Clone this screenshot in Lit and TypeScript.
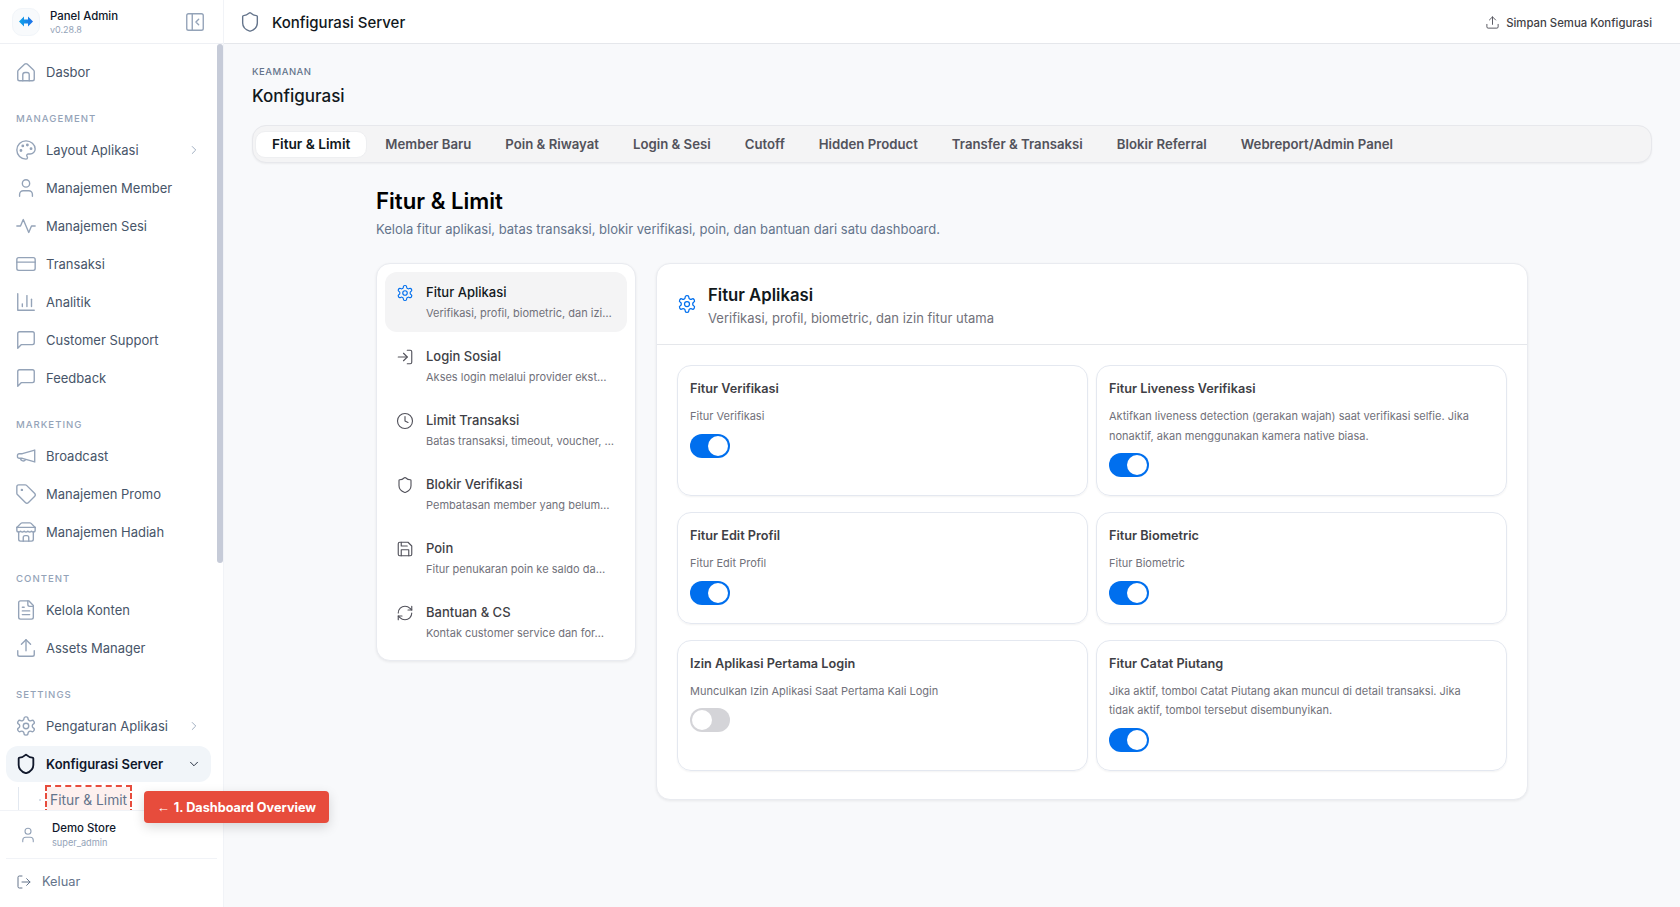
import { LitElement, html, css, svg } from "lit";
import { customElement } from "lit/decorators.js";

const S: Record<string, any> = {
  home: svg`<path d="M3.800 9.800 10.700 3.400a2 2 0 0 1 2.600 0L20.200 9.800a2.200 2.200 0 0 1 .8 1.600V19.500a2 2 0 0 1-2 2H5a2 2 0 0 1-2-2v-8.100a2.200 2.200 0 0 1 .8-1.600z"/><path d="M8.500 21.500V15a2.500 2.500 0 0 1 2.500-2.500h2a2.500 2.500 0 0 1 2.500 2.500v6.500"/>`,
  palette: svg`<circle cx="13.500" cy="6.500" r=".8" fill="currentColor"/><circle cx="17.500" cy="10.500" r=".8" fill="currentColor"/><circle cx="8.500" cy="7.500" r=".8" fill="currentColor"/><circle cx="6.500" cy="12.500" r=".8" fill="currentColor"/><path d="M12 2C6.500 2 2 6.500 2 12s4.500 10 10 10c.926 0 1.648-.746 1.648-1.688 0-.437-.18-.835-.437-1.125-.290-.289-.438-.652-.438-1.125a1.640 1.640 0 0 1 1.668-1.668h1.996c3.051 0 5.555-2.503 5.555-5.554C21.965 6.012 17.461 2 12 2z"/>`,
  user: svg`<path d="M19 21v-2a4 4 0 0 0-4-4H9a4 4 0 0 0-4 4v2"/><circle cx="12" cy="7" r="4"/>`,
  activity: svg`<path d="M22 12h-4l-3 7L9 5l-3 7H2"/>`,
  card: svg`<rect x="2" y="5" width="20" height="14" rx="2"/><line x1="2" y1="10" x2="22" y2="10"/>`,
  chart: svg`<path d="M3 3v18h18"/><path d="M18 17V9"/><path d="M13 17V5"/><path d="M8 17v-3"/>`,
  msg: svg`<path d="M21 15a2 2 0 0 1-2 2H7l-4 4V5a2 2 0 0 1 2-2h14a2 2 0 0 1 2 2z"/>`,
  megaphone: svg`<path d="M21.500 5.500 8 9.500H4.500a1.800 1.800 0 0 0-1.800 1.800v1.400a1.800 1.800 0 0 0 1.800 1.800H8l13.500 4z"/><path d="M11.500 16a3 3 0 0 1-5.500-1"/>`,
  tag: svg`<path d="M12.586 2.586A2 2 0 0 0 11.172 2H4a2 2 0 0 0-2 2v7.172a2 2 0 0 0 .586 1.414l8.704 8.704a2.426 2.426 0 0 0 3.420 0l6.580-6.580a2.426 2.426 0 0 0 0-3.420z"/><circle cx="7.500" cy="7.500" r=".6" fill="currentColor"/>`,
  store: svg`<path d="m2 7 4.410-4.410A2 2 0 0 1 7.830 2h8.340a2 2 0 0 1 1.420.590L22 7"/><path d="M4 12v8a2 2 0 0 0 2 2h12a2 2 0 0 0 2-2v-8"/><path d="M15 22v-4a2 2 0 0 0-2-2h-2a2 2 0 0 0-2 2v4"/><path d="M2 7h20"/><path d="M22 7v3a2 2 0 0 1-2 2a2.700 2.700 0 0 1-1.590-.630.700.700 0 0 0-.820 0A2.700 2.700 0 0 1 16 12a2.700 2.700 0 0 1-1.590-.630.700.700 0 0 0-.820 0A2.700 2.700 0 0 1 12 12a2.700 2.700 0 0 1-1.590-.630.700.700 0 0 0-.820 0A2.700 2.700 0 0 1 8 12a2.700 2.700 0 0 1-1.590-.630.700.700 0 0 0-.820 0A2.700 2.700 0 0 1 4 12a2 2 0 0 1-2-2V7"/>`,
  file: svg`<path d="M15 2H6a2 2 0 0 0-2 2v16a2 2 0 0 0 2 2h12a2 2 0 0 0 2-2V7z"/><path d="M14 2v4a2 2 0 0 0 2 2h4"/><path d="M10 9H8"/><path d="M16 13H8"/><path d="M16 17H8"/>`,
  upload: svg`<path d="M21 15v4a2 2 0 0 1-2 2H5a2 2 0 0 1-2-2v-4"/><polyline points="17 8 12 3 7 8"/><line x1="12" y1="3" x2="12" y2="15"/>`,
  gear: svg`<path d="M12.220 2h-.44a2 2 0 0 0-2 2v.18a2 2 0 0 1-1 1.730l-.43.25a2 2 0 0 1-2 0l-.15-.08a2 2 0 0 0-2.730.730l-.22.38a2 2 0 0 0 .730 2.730l.15.1a2 2 0 0 1 1 1.720v.51a2 2 0 0 1-1 1.740l-.15.09a2 2 0 0 0-.730 2.730l.22.38a2 2 0 0 0 2.730.730l.15-.08a2 2 0 0 1 2 0l.43.25a2 2 0 0 1 1 1.730V20a2 2 0 0 0 2 2h.44a2 2 0 0 0 2-2v-.18a2 2 0 0 1 1-1.730l.43-.25a2 2 0 0 1 2 0l.15.08a2 2 0 0 0 2.730-.730l.22-.39a2 2 0 0 0-.730-2.730l-.15-.08a2 2 0 0 1-1-1.740v-.5a2 2 0 0 1 1-1.740l.15-.09a2 2 0 0 0 .730-2.730l-.22-.38a2 2 0 0 0-2.730-.730l-.15.08a2 2 0 0 1-2 0l-.43-.25a2 2 0 0 1-1-1.730V4a2 2 0 0 0-2-2z"/><circle cx="12" cy="12" r="3"/>`,
  shield: svg`<path d="M20 13c0 5-3.500 7.500-7.660 8.950a1 1 0 0 1-.67-.01C7.500 20.500 4 18 4 13V6a1 1 0 0 1 1-1c2 0 4.500-1.200 6.240-2.720a1.170 1.170 0 0 1 1.520 0C14.510 3.810 17 5 19 5a1 1 0 0 1 1 1z"/>`,
  login: svg`<path d="M15 3h4a2 2 0 0 1 2 2v14a2 2 0 0 1-2 2h-4"/><polyline points="10 17 15 12 10 7"/><line x1="15" y1="12" x2="3" y2="12"/>`,
  logout: svg`<path d="M9 21H5a2 2 0 0 1-2-2V5a2 2 0 0 1 2-2h4"/><polyline points="16 17 21 12 16 7"/><line x1="21" y1="12" x2="9" y2="12"/>`,
  clock: svg`<circle cx="12" cy="12" r="10"/><polyline points="12 6 12 12 16 14"/>`,
  save: svg`<path d="M19 21H5a2 2 0 0 1-2-2V5a2 2 0 0 1 2-2h11l5 5v11a2 2 0 0 1-2 2z"/><polyline points="17 21 17 13 7 13 7 21"/><polyline points="7 3 7 8 15 8"/>`,
  refresh: svg`<path d="M3 12a9 9 0 0 1 9-9 9.750 9.750 0 0 1 6.740 2.740L21 8"/><path d="M21 3v5h-5"/><path d="M21 12a9 9 0 0 1-9 9 9.750 9.750 0 0 1-6.740-2.740L3 16"/><path d="M8 16H3v5"/>`,
  panel: svg`<rect x="3" y="3" width="18" height="18" rx="2"/><path d="M9 3v18"/><path d="m16 15-3-3 3-3"/>`,
  right: svg`<path d="m9 18 6-6-6-6"/>`,
  down: svg`<path d="m6 9 6 6 6-6"/>`,
};

const icon = (n: string, size = 18, w = 1.5) => html`<svg class="ic" width=${size} height=${size} viewBox="0 0 24 24" fill="none" stroke="currentColor" stroke-width=${w} stroke-linecap="round" stroke-linejoin="round">${S[n]}</svg>`;

type Nav = { i: string; t: string; c?: string };
const SECTIONS: { h?: string; items: Nav[] }[] = [
  { items: [{ i: "home", t: "Dasbor" }] },
  { h: "MANAGEMENT", items: [
    { i: "palette", t: "Layout Aplikasi", c: "right" },
    { i: "user", t: "Manajemen Member" },
    { i: "activity", t: "Manajemen Sesi" },
    { i: "card", t: "Transaksi" },
    { i: "chart", t: "Analitik" },
    { i: "msg", t: "Customer Support" },
    { i: "msg", t: "Feedback" },
  ] },
  { h: "MARKETING", items: [
    { i: "megaphone", t: "Broadcast" },
    { i: "tag", t: "Manajemen Promo" },
    { i: "store", t: "Manajemen Hadiah" },
  ] },
  { h: "CONTENT", items: [
    { i: "file", t: "Kelola Konten" },
    { i: "upload", t: "Assets Manager" },
  ] },
  { h: "SETTINGS", items: [
    { i: "gear", t: "Pengaturan Aplikasi", c: "right" },
  ] },
];

const TABS = ["Fitur & Limit", "Member Baru", "Poin & Riwayat", "Login & Sesi", "Cutoff", "Hidden Product", "Transfer & Transaksi", "Blokir Referral", "Webreport/Admin Panel"];

const MENU = [
  { i: "gear", t: "Fitur Aplikasi", d: "Verifikasi, profil, biometric, dan izi…" },
  { i: "login", t: "Login Sosial", d: "Akses login melalui provider ekst…" },
  { i: "clock", t: "Limit Transaksi", d: "Batas transaksi, timeout, voucher, …" },
  { i: "shield", t: "Blokir Verifikasi", d: "Pembatasan member yang belum…" },
  { i: "save", t: "Poin", d: "Fitur penukaran poin ke saldo da…" },
  { i: "refresh", t: "Bantuan & CS", d: "Kontak customer service dan for…" },
];

const CARDS = [
  { t: "Fitur Verifikasi", d: "Fitur Verifikasi", on: true },
  { t: "Fitur Liveness Verifikasi", d: "Aktifkan liveness detection (gerakan wajah) saat verifikasi selfie. Jika nonaktif, akan menggunakan kamera native biasa.", on: true },
  { t: "Fitur Edit Profil", d: "Fitur Edit Profil", on: true },
  { t: "Fitur Biometric", d: "Fitur Biometric", on: true },
  { t: "Izin Aplikasi Pertama Login", d: "Munculkan Izin Aplikasi Saat Pertama Kali Login", on: false },
  { t: "Fitur Catat Piutang", d: "Jika aktif, tombol Catat Piutang akan muncul di detail transaksi. Jika tidak aktif, tombol tersebut disembunyikan.", on: true },
];

@customElement("app-root")
export class AppRoot extends LitElement {
  static styles = css`
    :host { display: block; height: 100vh; font-family: Inter, "Liberation Sans", sans-serif; color: #11181c; }
    * { box-sizing: border-box; }
    .ic { flex: none; display: block; }
    .app { position: relative; display: flex; height: 907px; overflow: hidden; background: #f8f9fb; }

    .side { position: relative; width: 224px; flex: none; display: flex; flex-direction: column; background: #fff; border-right: 1px solid #f1f3f7; }
    .brand { height: 44px; flex: none; display: flex; align-items: center; padding: 0 17px 0 12px; border-bottom: 1px solid #eef0f4; }
    .logo { width: 28px; height: 28px; border-radius: 10px; background: #f8fafc; border: 1px solid #f1f5f9; display: flex; align-items: center; justify-content: center; flex: none; }
    .brand-text { margin-left: 10px; flex: 1; display: flex; flex-direction: column; padding-top: 1px; }
    .brand-name { font-size: 11.4px; line-height: 15px; font-weight: 500; color: #0f172a; }
    .brand-ver { font-size: 9px; line-height: 12px; color: #94a3b8; }
    .collapse { color: #94a3b8; }

    .nav { flex: 1; min-height: 0; overflow: hidden; padding-top: 8px; display: flex; flex-direction: column; }
    .thumb { position: absolute; left: 217px; top: 44px; width: 6px; height: 519px; border-radius: 3px; background: #c6cbd8; }
    .label { flex: none; font-size: 9.6px; line-height: 15px; font-weight: 500; letter-spacing: 1px; color: #94a3b8; padding: 21px 0 0 16px; box-sizing: content-box; margin-bottom: 4px; }
    .item { flex: none; height: 36px; margin: 2px 12px 0 6px; padding: 0 10px 0 9px; border-radius: 12px; display: flex; align-items: center; gap: 9px; font-size: 13px; color: #475569; }
    .item .ic:first-child { color: #94a3b8; }
    .item span { flex: 1; white-space: nowrap; }
    .item .chev { color: #94a3b8; flex: none; }
    .item.active { background: #f1f5f9; color: #0f172a; font-weight: 600; }
    .item.active .ic:first-child { color: #0f172a; }
    .subs { flex: none; margin: 5px 0 0 18px; border-left: 1px solid #e2e8f0; }
    .sub { display: flex; align-items: center; height: 26px; }
    .dot { width: 2px; height: 2px; border-radius: 1px; background: #cbd5e1; margin-left: 20px; }
    .sub-t { margin-left: 6px; height: 26px; padding: 0 3px; display: flex; align-items: center; font-size: 13.8px; color: #64748b; white-space: nowrap; }
    .sub-t.mark { outline: 2px dashed #e74c3c; background: #fdf0ee; }

    .foot { flex: none; height: 97px; background: #fff; border-top: 1px solid #f1f3f7; display: flex; flex-direction: column; }
    .who { height: 47px; flex: none; display: flex; align-items: center; padding-left: 19px; gap: 15px; color: #94a3b8; }
    .who-t { display: flex; flex-direction: column; }
    .who-n { font-size: 11.4px; line-height: 16px; font-weight: 500; color: #0f172a; }
    .who-r { font-size: 9.2px; line-height: 14px; color: #94a3b8; }
    .rule { height: 1px; margin: 0 6px; background: #f1f3f7; flex: none; }
    .out { flex: 1; display: flex; align-items: center; gap: 10px; padding: 0 0 3px 16px; font-size: 12.8px; color: #64748b; }

    .tip { position: absolute; left: 144px; top: 791px; width: 185px; height: 32px; border-radius: 4px; background: #e74c3c; color: #fff; font-size: 12.7px; font-weight: 700; display: flex; align-items: center; justify-content: center; gap: 4px; white-space: nowrap; box-shadow: 0 4px 12px rgba(0,0,0,.15); }
    .tip b { font-family: "Liberation Sans", sans-serif; font-weight: 400; font-size: 13px; }

    .main { flex: 1; min-width: 0; display: flex; flex-direction: column; }
    .top { height: 44px; flex: none; background: #fff; border-bottom: 1px solid #e5e7eb; display: flex; align-items: center; padding: 1px 28px 0 15px; }
    .top-title { margin-left: 11px; flex: 1; font-size: 15px; font-weight: 500; color: #11181c; }
    .top .ic { color: #64748b; margin-top: -1px; }
    .save { display: flex; align-items: center; gap: 6px; font-size: 11.35px; line-height: 16px; font-weight: 500; color: #3f3f46; padding-top: 1px; }
    .save .ic { color: #52525b; }

    .body { flex: 1; padding: 21px 28px 0; }
    .crumb { font-size: 9.5px; line-height: 14px; font-weight: 500; letter-spacing: .5px; color: #64748b; }
    .h1 { font-size: 17px; line-height: 28px; font-weight: 500; margin-top: 3px; color: #11181c; }
    .tabs { margin-top: 15px; height: 38px; display: flex; align-items: center; gap: 2px; padding: 0 3px; background: #f4f4f5; border: 1px solid #e7e8ec; border-radius: 14px; box-shadow: 0 1px 2px rgba(0,0,0,.05); }
    .tab { height: 27px; padding: 0 16px; display: flex; align-items: center; font-size: 13.2px; font-weight: 600; color: #52525b; border-radius: 10px; white-space: nowrap; }
    .tab.on { background: #fff; color: #11181c; border: 1px solid #eeeff1; padding: 0 16px; font-size: 13.7px; margin-left: -1px; }

    .wrap { width: 1152px; margin: 22px auto 0; }
    .title { font-size: 22.2px; line-height: 32px; font-weight: 600; color: #000; }
    .lede { font-size: 13px; line-height: 20px; margin-top: 2px; color: #64748b; }
    .cols { display: flex; align-items: flex-start; gap: 20px; margin-top: 24px; }

    .panel { background: #fff; border: 1px solid #e9ebf0; border-radius: 14px; box-shadow: 0 1px 3px rgba(0,0,0,.07); }
    .menu { width: 260px; flex: none; padding: 8px; display: flex; flex-direction: column; gap: 4px; }
    .mi { height: 60px; display: flex; gap: 12px; padding: 10px 10px 0 11px; border-radius: 12px; color: #52525b; }
    .mi .ic { margin-top: 2px; }
    .mi.on { background: #f4f4f5; }
    .mi.on .ic { color: #006fee; }
    .mi-t { min-width: 0; flex: 1; }
    .mi-h { font-size: 13px; line-height: 20px; font-weight: 500; color: #3f3f46; }
    .mi.on .mi-h { color: #11181c; }
    .mi-d { font-size: 11px; line-height: 16px; margin-top: 3px; color: #71717a; white-space: nowrap; }

    .detail { flex: 1; min-width: 0; }
    .d-head { height: 81px; display: flex; align-items: center; gap: 11px; padding: 2px 20px 0; border-bottom: 1px solid #e5e7eb; }
    .d-head .ic { color: #006fee; margin-top: -2px; }
    .d-t { font-size: 16.7px; line-height: 26px; font-weight: 600; color: #11181c; }
    .d-s { font-size: 13px; line-height: 20px; color: #71717a; }
    .grid { display: grid; grid-template-columns: 1fr 1fr; column-gap: 8px; row-gap: 16px; padding: 20px 20px 28px; }
    .card { border: 1px solid #e4e8f0; border-radius: 14px; padding: 13px 12px 18px; box-shadow: 0 1px 2px rgba(0,0,0,.05); display: flex; flex-direction: column; align-items: flex-start; }
    .c-t { font-size: 12.7px; line-height: 20px; font-weight: 600; color: #3f3f46; }
    .c-d { font-size: 11px; line-height: 19.5px; color: #71717a; margin-top: 8px; max-width: 375px; }
    .sw { width: 40px; height: 24px; border-radius: 12px; background: #d4d4d8; display: flex; align-items: center; padding: 2px; margin-top: 7px; }
    .sw i { display: block; width: 20px; height: 20px; border-radius: 50%; background: #fff; }
    .sw.on { background: #006fee; justify-content: flex-end; }
  `;

  render() {
    return html`<div class="app">
      <aside class="side">
        <div class="brand">
          <div class="logo">
            <svg width="14" height="11" viewBox="0 0 14 11"><defs><linearGradient id="lg" x1="0" x2="1" y1="0" y2="0"><stop offset="0" stop-color="#0ea5e9"/><stop offset="1" stop-color="#1d6fe8"/></linearGradient></defs><path d="M5 .5 0 5.500l5 5V7.500h4v3l5-5-5-5v3H5z" fill="url(#lg)"/></svg>
          </div>
          <div class="brand-text"><span class="brand-name">Panel Admin</span><span class="brand-ver">v0.28.8</span></div>
          <span class="collapse">${icon("panel", 22)}</span>
        </div>
        <div class="nav">
          ${SECTIONS.map(s => html`
            ${s.h ? html`<div class="label">${s.h}</div>` : ""}
            ${s.items.map(it => html`<div class="item">${icon(it.i, 22)}<span>${it.t}</span>${it.c ? html`<span class="chev">${icon(it.c, 14)}</span>` : ""}</div>`)}
          `)}
          <div class="item active">${icon("shield", 22, 2)}<span>Konfigurasi Server</span><span class="chev">${icon("down", 14)}</span></div>
          <div class="subs">
            <div class="sub"><i class="dot"></i><div class="sub-t mark">Fitur &amp; Limit</div></div>
          </div>
        </div>
        <div class="thumb"></div>
        <div class="foot">
          <div class="who">${icon("user", 18)}<div class="who-t"><span class="who-n">Demo Store</span><span class="who-r">super_admin</span></div></div>
          <div class="rule"></div>
          <div class="out">${icon("logout", 16)}<span>Keluar</span></div>
        </div>
      </aside>
      <main class="main">
        <header class="top">
          ${icon("shield", 22)}
          <span class="top-title">Konfigurasi Server</span>
          <div class="save">${icon("upload", 15)}<span>Simpan Semua Konfigurasi</span></div>
        </header>
        <div class="body">
          <div class="crumb">KEAMANAN</div>
          <div class="h1">Konfigurasi</div>
          <div class="tabs">${TABS.map((t, i) => html`<div class="tab ${i === 0 ? "on" : ""}">${t}</div>`)}</div>
          <div class="wrap">
            <div class="title">Fitur &amp; Limit</div>
            <div class="lede">Kelola fitur aplikasi, batas transaksi, blokir verifikasi, poin, dan bantuan dari satu dashboard.</div>
            <div class="cols">
              <div class="panel menu">
                ${MENU.map((m, i) => html`<div class="mi ${i === 0 ? "on" : ""}">${icon(m.i, 18)}<div class="mi-t"><div class="mi-h">${m.t}</div><div class="mi-d">${m.d}</div></div></div>`)}
              </div>
              <div class="panel detail">
                <div class="d-head">${icon("gear", 20)}<div><div class="d-t">Fitur Aplikasi</div><div class="d-s">Verifikasi, profil, biometric, dan izin fitur utama</div></div></div>
                <div class="grid">
                  ${CARDS.map(c => html`<div class="card"><div class="c-t">${c.t}</div><div class="c-d">${c.d}</div><div class="sw ${c.on ? "on" : ""}"><i></i></div></div>`)}
                </div>
              </div>
            </div>
          </div>
        </div>
      </main>
      <div class="tip"><b>←</b><span>1. Dashboard Overview</span></div>
    </div>`;
  }
}
